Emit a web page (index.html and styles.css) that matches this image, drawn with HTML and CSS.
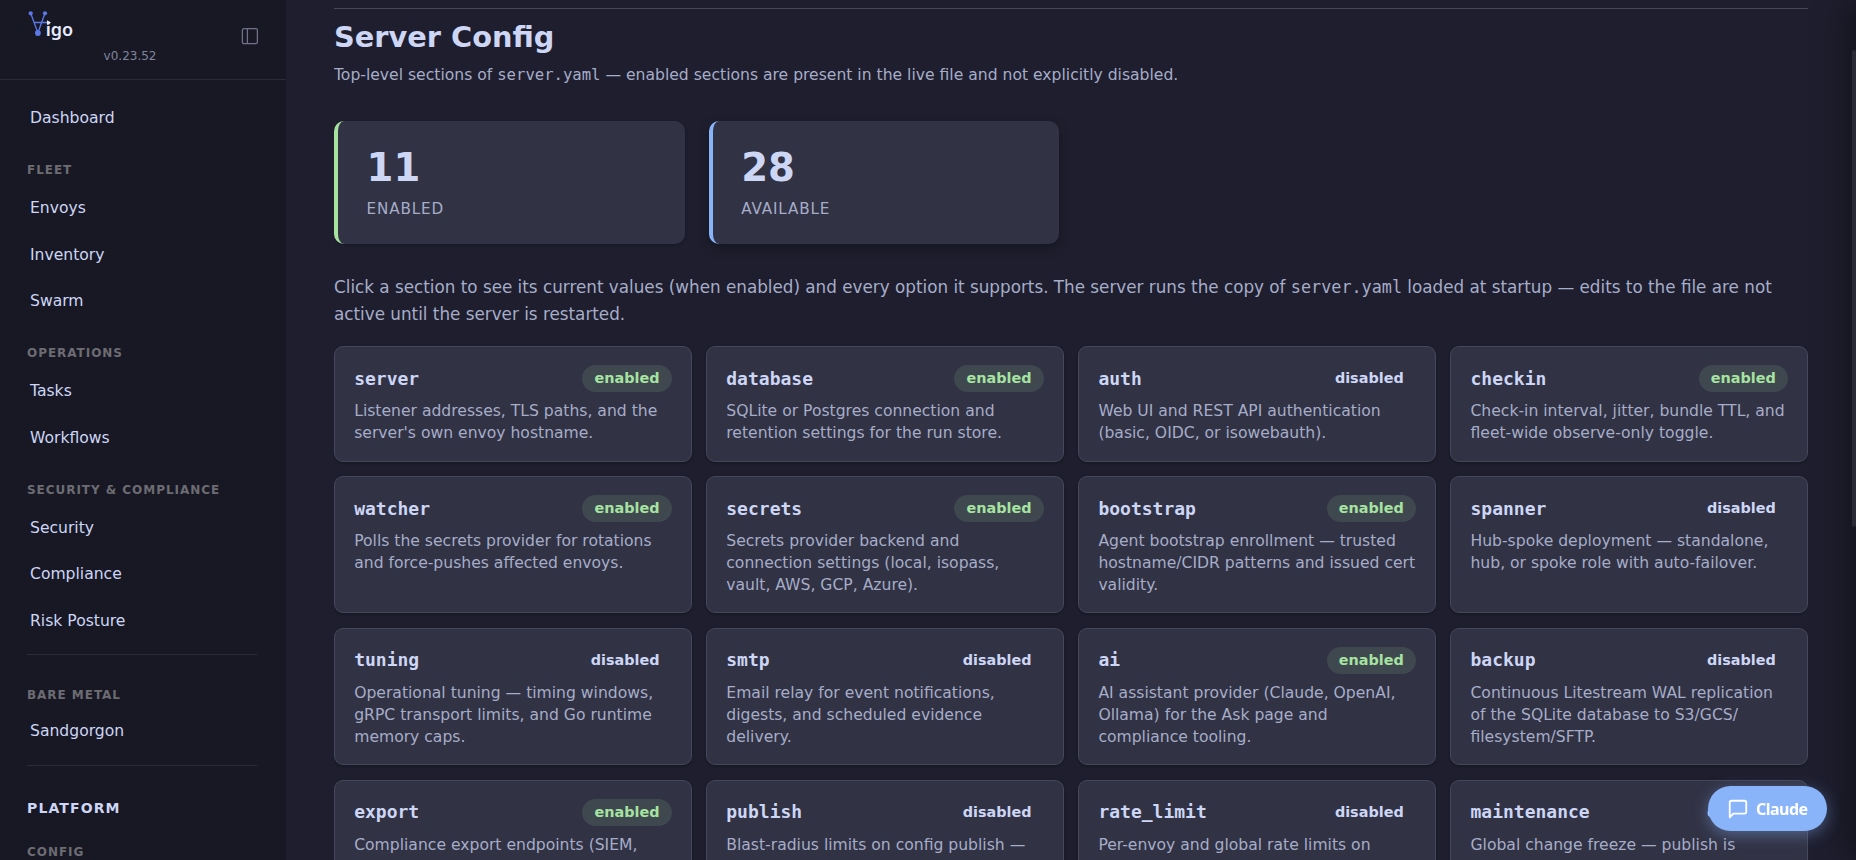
FILE: index.html
```html
<!DOCTYPE html>
<html lang="en">
<head>
<meta charset="utf-8">
<title>Vigo - Server Config</title>
<link rel="stylesheet" href="styles.css">
</head>
<body>
<aside class="sidebar">
  <header class="brand">
    <div class="brand-id">
      <svg class="logo" width="52" height="34" viewBox="0 0 52 34">
        <path d="M5.7 6.2 12.9 25.8 20 6.2M9 15.5h14" fill="none" stroke="#5b78e8" stroke-width="1.3"/>
        <circle cx="5.7" cy="6.3" r="2.1" fill="#5b78e8"/><circle cx="20" cy="6.3" r="2.1" fill="#5b78e8"/><circle cx="12.9" cy="26" r="2.9" fill="#5b78e8"/>
        <path d="M22 13.2l4 2.4-4 2.4z" fill="#e6ebff"/>
        <text class="logo-text" x="20.7" y="29" textLength="27.3">igo</text>
      </svg>
      <span class="version">v0.23.52</span>
    </div>
    <svg class="toggle" width="18" height="18" viewBox="0 0 18 18" fill="none" stroke="currentColor" stroke-width="1.3"><rect x="1.4" y="1.7" width="15" height="15" rx="1.6"/><path d="M6.4 1.7v15"/></svg>
  </header>
  <nav class="nav">
    <a class="link">Dashboard</a>
    <h6 class="group">Fleet</h6>
    <a class="link">Envoys</a><a class="link">Inventory</a><a class="link">Swarm</a>
    <h6 class="group">Operations</h6>
    <a class="link">Tasks</a><a class="link">Workflows</a>
    <h6 class="group">Security &amp; Compliance</h6>
    <a class="link">Security</a><a class="link">Compliance</a><a class="link">Risk Posture</a>
    <hr class="rule">
    <h6 class="group after-rule">Bare Metal</h6>
    <a class="link">Sandgorgon</a>
    <hr class="rule">
    <h5 class="platform">Platform</h5>
    <h6 class="group">Config</h6>
  </nav>
</aside>
<main class="main">
  <h1 class="title">Server Config</h1>
  <p class="subtitle">Top-level sections of <code>server.yaml</code> — enabled sections are present in the live file and not explicitly disabled.</p>
  <div class="stats">
    <div class="stat"><div class="num">11</div><div class="label">Enabled</div></div>
    <div class="stat available"><div class="num">28</div><div class="label">Available</div></div>
  </div>
  <p class="intro">Click a section to see its current values (when enabled) and every option it supports. The server runs the copy of <code>server.yaml</code> loaded at startup — edits to the file are not active until the server is restarted.</p>
  <div class="grid">
    <article class="card"><header class="head"><code>server</code><span class="badge on">enabled</span></header><p>Listener addresses, TLS paths, and the server's own envoy hostname.</p></article>
    <article class="card"><header class="head"><code>database</code><span class="badge on">enabled</span></header><p>SQLite or Postgres connection and retention settings for the run store.</p></article>
    <article class="card"><header class="head"><code>auth</code><span class="badge">disabled</span></header><p>Web UI and REST API authentication (basic, OIDC, or isowebauth).</p></article>
    <article class="card"><header class="head"><code>checkin</code><span class="badge on">enabled</span></header><p>Check-in interval, jitter, bundle TTL, and fleet-wide observe-only toggle.</p></article>
    <article class="card"><header class="head"><code>watcher</code><span class="badge on">enabled</span></header><p>Polls the secrets provider for rotations and force-pushes affected envoys.</p></article>
    <article class="card"><header class="head"><code>secrets</code><span class="badge on">enabled</span></header><p>Secrets provider backend and connection settings (local, isopass, vault, AWS, GCP, Azure).</p></article>
    <article class="card"><header class="head"><code>bootstrap</code><span class="badge on">enabled</span></header><p>Agent bootstrap enrollment — trusted hostname/CIDR patterns and issued cert validity.</p></article>
    <article class="card"><header class="head"><code>spanner</code><span class="badge">disabled</span></header><p>Hub-spoke deployment — standalone, hub, or spoke role with auto-failover.</p></article>
    <article class="card"><header class="head"><code>tuning</code><span class="badge">disabled</span></header><p>Operational tuning — timing windows, gRPC transport limits, and Go runtime memory caps.</p></article>
    <article class="card"><header class="head"><code>smtp</code><span class="badge">disabled</span></header><p>Email relay for event notifications, digests, and scheduled evidence delivery.</p></article>
    <article class="card"><header class="head"><code>ai</code><span class="badge on">enabled</span></header><p>AI assistant provider (Claude, OpenAI, Ollama) for the Ask page and compliance tooling.</p></article>
    <article class="card"><header class="head"><code>backup</code><span class="badge">disabled</span></header><p>Continuous Litestream WAL replication of the SQLite database to S3/GCS/<wbr>filesystem/SFTP.</p></article>
    <article class="card"><header class="head"><code>export</code><span class="badge on">enabled</span></header><p>Compliance export endpoints (SIEM, CMDB, OSCAL) — push and schedule.</p></article>
    <article class="card"><header class="head"><code>publish</code><span class="badge">disabled</span></header><p>Blast-radius limits on config publish — max envoys matched by one project.</p></article>
    <article class="card"><header class="head"><code>rate_limit</code><span class="badge">disabled</span></header><p>Per-envoy and global rate limits on check-in RPCs.</p></article>
    <article class="card"><header class="head"><code>maintenance</code><span class="badge">disabled</span></header><p>Global change freeze — publish is blocked until the config window lifts.</p></article>
  </div>
</main>
<div class="edge"></div>
<div class="thumb"></div>
<button class="chat"><svg width="22" height="22" viewBox="0 0 24 24" fill="none" stroke="currentColor" stroke-width="2" stroke-linecap="round" stroke-linejoin="round"><path d="M21 15a2 2 0 0 1-2 2H7l-4 4V5a2 2 0 0 1 2-2h14a2 2 0 0 1 2 2z"/></svg>Claude</button>
</body>
</html>
```
FILE: styles.css
```css
* { box-sizing: border-box; }
body { margin: 0; height: 860px; overflow: hidden; display: flex; background: #1e1e2e; color: #cdd6f4; font-family: "DejaVu Sans", sans-serif; font-size: 16.8px; }
h1, h5, h6, p { margin: 0; }
code { font-family: "DejaVu Sans Mono", monospace; }
.sidebar { width: 286px; flex: none; background: #181825; height: 860px; overflow: hidden; }
.brand { height: 80px; border-bottom: 1px solid #292a39; display: flex; justify-content: space-between; padding: 7px 27px 0 25px; }
.brand-id { display: flex; flex-direction: column; width: 140px; }
.logo { display: block; }
.logo-text { font: 600 18px "Noto Sans", sans-serif; fill: #e6ebff; }
.version { align-self: flex-end; font-size: 12px; line-height: 16px; margin: 7px 8.5px 0 0; color: #7f849c; }
.toggle { color: #6f7189; margin-top: 20px; }
.nav { padding: 18px 29px 0 27px; display: flex; flex-direction: column; }
.link { font-size: 15.6px; line-height: 24px; padding: 8px 3px; margin-bottom: 6.4px; }
.group { font-size: 12px; line-height: 18px; letter-spacing: .96px; text-transform: uppercase; color: #6c6c72; margin: 16.7px 0 9.2px; }
.group.after-rule { margin: 18.2px 0 7.5px; }
.rule { width: 100%; height: 1px; border: 0; background: #2a2b3a; margin: 7px 0 12.5px; }
.platform { font-size: 14px; letter-spacing: 1.12px; line-height: 20px; text-transform: uppercase; margin: 20px 0 8px; }
.main { width: 1474px; margin-left: 48px; margin-top: 8px; border-top: 1px solid #45475a; height: 852px; overflow: hidden; }
.title { font-size: 28.8px; line-height: 36px; margin-top: 10px; }
.subtitle { font-size: 15.6px; line-height: 24px; color: #a6adc8; margin-top: 8px; }
.stats { display: flex; gap: 24px; margin-top: 34px; }
.stat { width: 350.6px; height: 123px; border-left: 4px solid #a6e3a1; border-radius: 10px; background: #313244; padding: 25px 28.6px; box-shadow: 0 1px 3px rgba(0,0,0,.25); }
.stat.available { border-color: #89b4fa; box-shadow: 0 4px 12px rgba(0,0,0,.3); }
.num { font-size: 38.64px; font-weight: bold; line-height: 44px; }
.label { font-size: 15.2px; line-height: 24px; margin-top: 7px; color: #a6adc8; letter-spacing: .84px; text-transform: uppercase; }
.intro { font-size: 16.8px; line-height: 27px; color: #a6adc8; margin: 30px 0 18px; }
.grid { display: grid; grid-template-columns: repeat(4, 1fr); gap: 14.4px; }
.card { border: 1px solid #45475a; border-radius: 9px; background: #313244; padding: 18.2px 19px 15.6px 19.2px; box-shadow: 0 1px 3px rgba(0,0,0,.3); }
.head { display: flex; justify-content: space-between; align-items: center; height: 27px; margin-bottom: 9px; }
.head code { font-size: 18px; font-weight: bold; line-height: 25px; margin-bottom: 1px; }
.badge { font-size: 14.4px; font-weight: bold; line-height: 27px; border-radius: 14px; padding: 0 12.2px; }
.badge.on { color: #a6e3a1; background: rgba(166,227,161,.12); }
.card p { font-size: 15.6px; line-height: 21.87px; color: #a6adc8; }
.edge { position: fixed; top: 0; left: 1856px; width: 400px; height: 860px; box-shadow: -8px 0 32px rgba(0,0,0,.4); }
.thumb { position: fixed; right: 0; top: 50px; width: 4px; height: 477px; border-radius: 2px; background: #292a36; }
.chat { position: fixed; left: 1707.5px; top: 786px; width: 119.5px; height: 45px; border: 0; border-radius: 23px; background: #89b4fa; color: #fff; font: 700 16px "Noto Sans", sans-serif; letter-spacing: -.5px; display: flex; align-items: center; justify-content: center; gap: 7px; padding: 0; box-shadow: 0 4px 16px rgba(137,180,250,.4); }
```
